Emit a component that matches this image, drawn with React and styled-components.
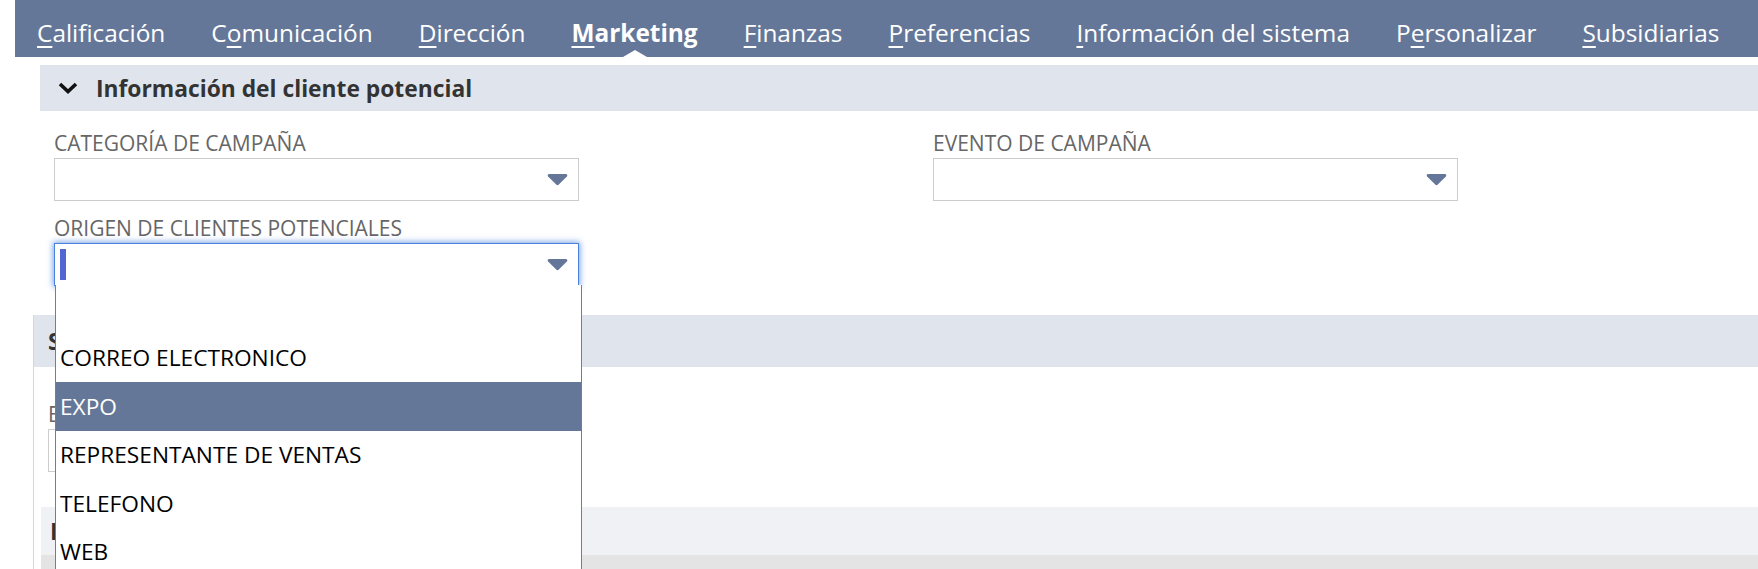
import React from 'react';
import styled, { createGlobalStyle } from 'styled-components';

const GlobalStyle = createGlobalStyle`
  html, body {
    margin: 0;
    padding: 0;
    background: #ffffff;
    overflow: hidden;
  }
  body {
    font-family: "Open Sans", "Noto Sans", "Liberation Sans", sans-serif;
  }
`;

const Page = styled.div`
  width: 1758px;
  height: 569px;
  overflow: hidden;
`;

const TabBar = styled.nav`
  display: flex;
  align-items: flex-start;
  gap: 46px;
  height: 57px;
  margin-left: 15px;
  padding-left: 22px;
  background-color: #657798;
`;

const Tab = styled.div`
  position: relative;
  box-sizing: border-box;
  height: 57px;
  padding-top: 16px;
  font-size: 24.4px;
  line-height: 33px;
  color: #ffffff;
  font-weight: ${(p) => (p.$active ? 700 : 400)};
  white-space: nowrap;

  u {
    text-decoration-thickness: 2px;
    text-underline-offset: 4px;
  }

  ${(p) =>
    p.$active &&
    `
    &::after {
      content: '';
      position: absolute;
      left: 50%;
      bottom: 0;
      margin-left: -12px;
      border-left: 12px solid transparent;
      border-right: 12px solid transparent;
      border-bottom: 7px solid #ffffff;
    }
  `}
`;

const SectionHeader = styled.div`
  display: flex;
  align-items: center;
  height: ${(p) => p.$height || 46}px;
  margin-left: ${(p) => p.$indent || 0}px;
  padding-left: ${(p) => p.$pad || 18}px;
  background-color: ${(p) => p.$bg || '#e0e5ed'};
  font-size: 22.8px;
  font-weight: 700;
  color: #333333;
  white-space: nowrap;
`;

const Chevron = styled.svg`
  width: 20px;
  height: 12px;
  margin-right: 18px;
`;

const TopSection = styled.section`
  margin-top: 8px;
  margin-left: 40px;
`;

const FieldGrid = styled.div`
  display: grid;
  grid-template-columns: 525px 525px;
  column-gap: 354px;
  row-gap: 15px;
  padding: 20px 0 0 14px;
`;

const Field = styled.div`
  position: relative;
  display: flex;
  flex-direction: column;
`;

const Label = styled.label`
  font-size: 21px;
  line-height: 24px;
  color: #666666;
  margin-bottom: 3px;
  white-space: nowrap;
`;

const SelectBox = styled.div`
  position: relative;
  box-sizing: border-box;
  width: ${(p) => p.$width || 525}px;
  height: 43px;
  border: 1px solid ${(p) => (p.$focused ? '#4a82dd' : '#cccccc')};
  box-shadow: ${(p) => (p.$focused ? '0 0 6px 1px rgba(74, 130, 221, 0.75)' : 'none')};
  background: #ffffff;
  display: flex;
  align-items: center;
  padding-left: 5px;
`;

const Caret = styled.span`
  width: 6px;
  height: 31px;
  background-color: #5266d4;
`;

const Arrow = styled.svg`
  position: absolute;
  right: 10px;
  top: 14px;
  width: 21px;
  height: 13px;
`;

const Menu = styled.ul`
  position: absolute;
  top: 100%;
  left: 0;
  z-index: 10;
  box-sizing: border-box;
  width: 527px;
  margin: 0;
  padding: 0;
  list-style: none;
  background: #ffffff;
  border: 1px solid #4a82dd;
  border-top: none;
`;

const Option = styled.li`
  height: 48.5px;
  display: flex;
  align-items: center;
  padding-left: 4px;
  font-size: 22.7px;
  color: ${(p) => (p.$selected ? '#ffffff' : '#000000')};
  background-color: ${(p) => (p.$selected ? '#657798' : 'transparent')};
`;

const LowerPanel = styled.section`
  margin-top: 29px;
  margin-left: 33px;
  border-left: 1px solid #d6d6d6;
  height: 260px;
`;

const PanelBody = styled.div`
  padding: 35px 0 35px 14px;
`;

const SubSection = styled.div`
  margin-left: 7px;
`;

const GrayBar = styled.div`
  height: 40px;
  background-color: #e4e4e4;
`;

const ArrowIcon = () => (
  <Arrow viewBox="0 0 21 13">
    <path
      d="M2.2 1 H18.8 C20.2 1 20.8 2.4 19.9 3.4 L11.8 11.6 C11.1 12.3 9.9 12.3 9.2 11.6 L1.1 3.4 C0.2 2.4 0.8 1 2.2 1 Z"
      fill="#657798"
    />
  </Arrow>
);

const tabs = [
  { key: 'C', rest: 'alificación' },
  { pre: 'C', key: 'o', rest: 'municación' },
  { key: 'D', rest: 'irección' },
  { key: 'M', rest: 'arketing', active: true },
  { key: 'F', rest: 'inanzas' },
  { key: 'P', rest: 'referencias' },
  { key: 'I', rest: 'nformación del sistema' },
  { pre: 'P', key: 'e', rest: 'rsonalizar' },
  { key: 'S', rest: 'ubsidiarias' },
];

const options = ['', 'CORREO ELECTRONICO', 'EXPO', 'REPRESENTANTE DE VENTAS', 'TELEFONO', 'WEB'];

export default function App() {
  return (
    <>
      <GlobalStyle />
      <Page>
        <TabBar>
          {tabs.map((t, i) => (
            <Tab key={i} $active={t.active}>
              {t.pre}
              <u>{t.key}</u>
              {t.rest}
            </Tab>
          ))}
        </TabBar>

        <TopSection>
          <SectionHeader>
            <Chevron viewBox="0 0 20 12">
              <path d="M2 2 L10 9.5 L18 2" fill="none" stroke="#111111" strokeWidth="3.6" />
            </Chevron>
            Información del cliente potencial
          </SectionHeader>

          <FieldGrid>
            <Field>
              <Label>CATEGORÍA DE CAMPAÑA</Label>
              <SelectBox>
                <ArrowIcon />
              </SelectBox>
            </Field>
            <Field>
              <Label>EVENTO DE CAMPAÑA</Label>
              <SelectBox>
                <ArrowIcon />
              </SelectBox>
            </Field>
            <Field>
              <Label>ORIGEN DE CLIENTES POTENCIALES</Label>
              <SelectBox $focused>
                <Caret />
                <ArrowIcon />
                <Menu>
                  {options.map((o, i) => (
                    <Option key={i} $selected={o === 'EXPO'}>
                      {o}
                    </Option>
                  ))}
                </Menu>
              </SelectBox>
            </Field>
          </FieldGrid>
        </TopSection>

        <LowerPanel>
          <SectionHeader $height={52} $pad={14}>
            Sistema
          </SectionHeader>
          <PanelBody>
            <Field>
              <Label>EMPRESA</Label>
              <SelectBox $width={468}>
                <ArrowIcon />
              </SelectBox>
            </Field>
          </PanelBody>
          <SubSection>
            <SectionHeader $height={48} $pad={9} $bg="#eff1f5">
              Información adicional
            </SectionHeader>
            <GrayBar />
          </SubSection>
        </LowerPanel>
      </Page>
    </>
  );
}
